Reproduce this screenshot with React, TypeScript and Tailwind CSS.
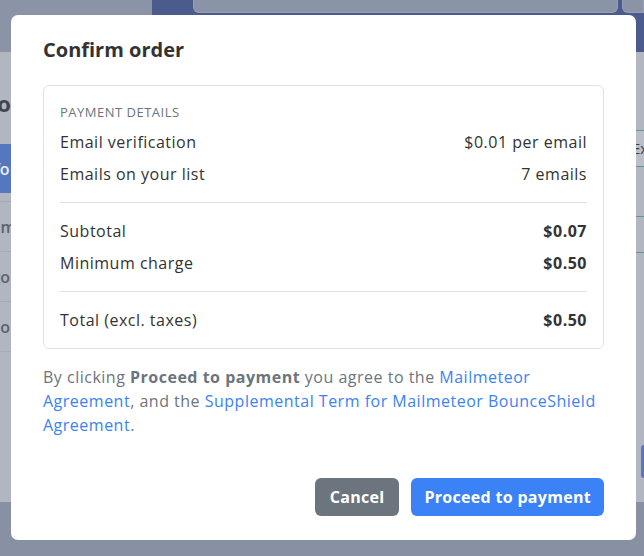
import React from "react";

const font = { fontFamily: '"Open Sans", "Liberation Sans", sans-serif' };

function Background() {
  return (
    <div className="flex h-full w-full flex-col bg-[#b2b6c0]">
      {/* header */}
      <div className="flex h-[52px]">
        <div className="w-[152px] bg-[#8a94a6]" />
        <div className="flex flex-1 items-start bg-[#4b5b8e]">
          <div className="w-[41px]" />
          <div className="h-[13px] flex-1 rounded-b-md border border-t-0 border-[#97a0b0] bg-[#8a94a6]" />
          <div className="ml-1 h-[13px] w-[22px] rounded-bl-md border border-t-0 border-[#97a0b0] bg-[#8a94a6]" />
        </div>
      </div>
      {/* body */}
      <div className="flex h-[450px]">
        <div className="flex w-[200px] flex-col overflow-hidden">
          <div className="mt-[37px] -ml-[19px] whitespace-nowrap text-[22px] font-bold leading-7 text-[#3f4451]">
            Docs
          </div>
          <div className="mt-[27px] flex h-[49px] items-center whitespace-nowrap bg-[#5577c0] text-[16px] font-semibold text-[#e9edf6]">
            <span className="-ml-[21px]">Info</span>
          </div>
          <div className="mt-2 flex h-[50px] items-center whitespace-nowrap border-t border-[#a5aab5] text-[16px] font-semibold text-[#5c6272]">
            <span className="-ml-[27px]">Team</span>
          </div>
          <div className="flex h-[50px] items-center whitespace-nowrap border-t border-[#a5aab5] text-[16px] font-semibold text-[#5c6272]">
            <span className="-ml-[27px]">Logo</span>
          </div>
          <div className="flex h-[50px] items-center whitespace-nowrap border-t border-[#a5aab5] text-[16px] font-semibold text-[#5c6272]">
            <span className="-ml-[36px]">Demo</span>
          </div>
          <div className="border-t border-[#a5aab5]" />
        </div>
        <div className="flex-1" />
        <div className="flex w-[8px] flex-col overflow-hidden">
          <div className="mt-[78px] flex h-[37px] items-center whitespace-nowrap border-y border-[#5b9b90] bg-[#babec7] text-[15px] text-[#3c3f46]">
            <span className="-ml-[4px]">Ex</span>
          </div>
          <div className="mt-[49px] h-[37px] border-y border-[#5b9b90]" />
          <div className="ml-[5px] mt-[192px] h-[33px] rounded-l-md bg-[#5877bf]" />
        </div>
      </div>
      {/* footer */}
      <div className="h-[54px] bg-[#8891a3]" />
    </div>
  );
}

function Row({ label, value, bold }: { label: string; value: string; bold?: boolean }) {
  return (
    <div className="flex items-center justify-between text-[16px] leading-6 text-[#333333]">
      <span>{label}</span>
      <span className={bold ? "font-bold" : ""}>{value}</span>
    </div>
  );
}

export default function App() {
  return (
    <div className="relative h-[556px] w-[644px] overflow-hidden" style={font}>
      <Background />
      <div className="absolute inset-0">
        <div className="ml-[11px] mt-[15px] flex h-[525px] w-[625px] flex-col rounded-[7px] bg-white px-8 pb-6 pt-[21px] tracking-[0.5px]">
          <h2 className="text-[20px] font-bold leading-7 tracking-normal text-[#333333]">Confirm order</h2>
          <div className="mt-[21px] rounded-md border border-[#dee2e6] px-4 py-4">
            <div className="text-[13px] uppercase leading-5 text-[#6c757d]">Payment details</div>
            <div className="mt-2 flex flex-col gap-2">
              <Row label="Email verification" value="$0.01 per email" />
              <Row label="Emails on your list" value="7 emails" />
            </div>
            <div className="my-4 border-t border-[#dee2e6]" />
            <div className="flex flex-col gap-2">
              <Row label="Subtotal" value="$0.07" bold />
              <Row label="Minimum charge" value="$0.50" bold />
            </div>
            <div className="my-4 border-t border-[#dee2e6]" />
            <Row label="Total (excl. taxes)" value="$0.50" bold />
          </div>
          <p className="mt-4 text-[16px] leading-6 text-[#6c757d]">
            By clicking <span className="font-bold">Proceed to payment</span> you agree to the{" "}
            <a className="text-[#3b82f6]">Mailmeteor</a>
            <br />
            <a className="text-[#3b82f6]">Agreement</a>, and the{" "}
            <a className="text-[#3b82f6]">Supplemental Term for Mailmeteor BounceShield</a>
            <br />
            <a className="text-[#3b82f6]">Agreement</a>.
          </p>
          <div className="mt-auto flex justify-end gap-3">
            <button className="h-[38px] rounded-md bg-[#6c757d] px-[15px] text-[16px] font-bold tracking-[0.3px] text-white">
              Cancel
            </button>
            <button className="h-[38px] rounded-md bg-[#3b82f6] px-[13px] text-[16px] font-bold tracking-[0.3px] text-white">
              Proceed to payment
            </button>
          </div>
        </div>
      </div>
    </div>
  );
}
